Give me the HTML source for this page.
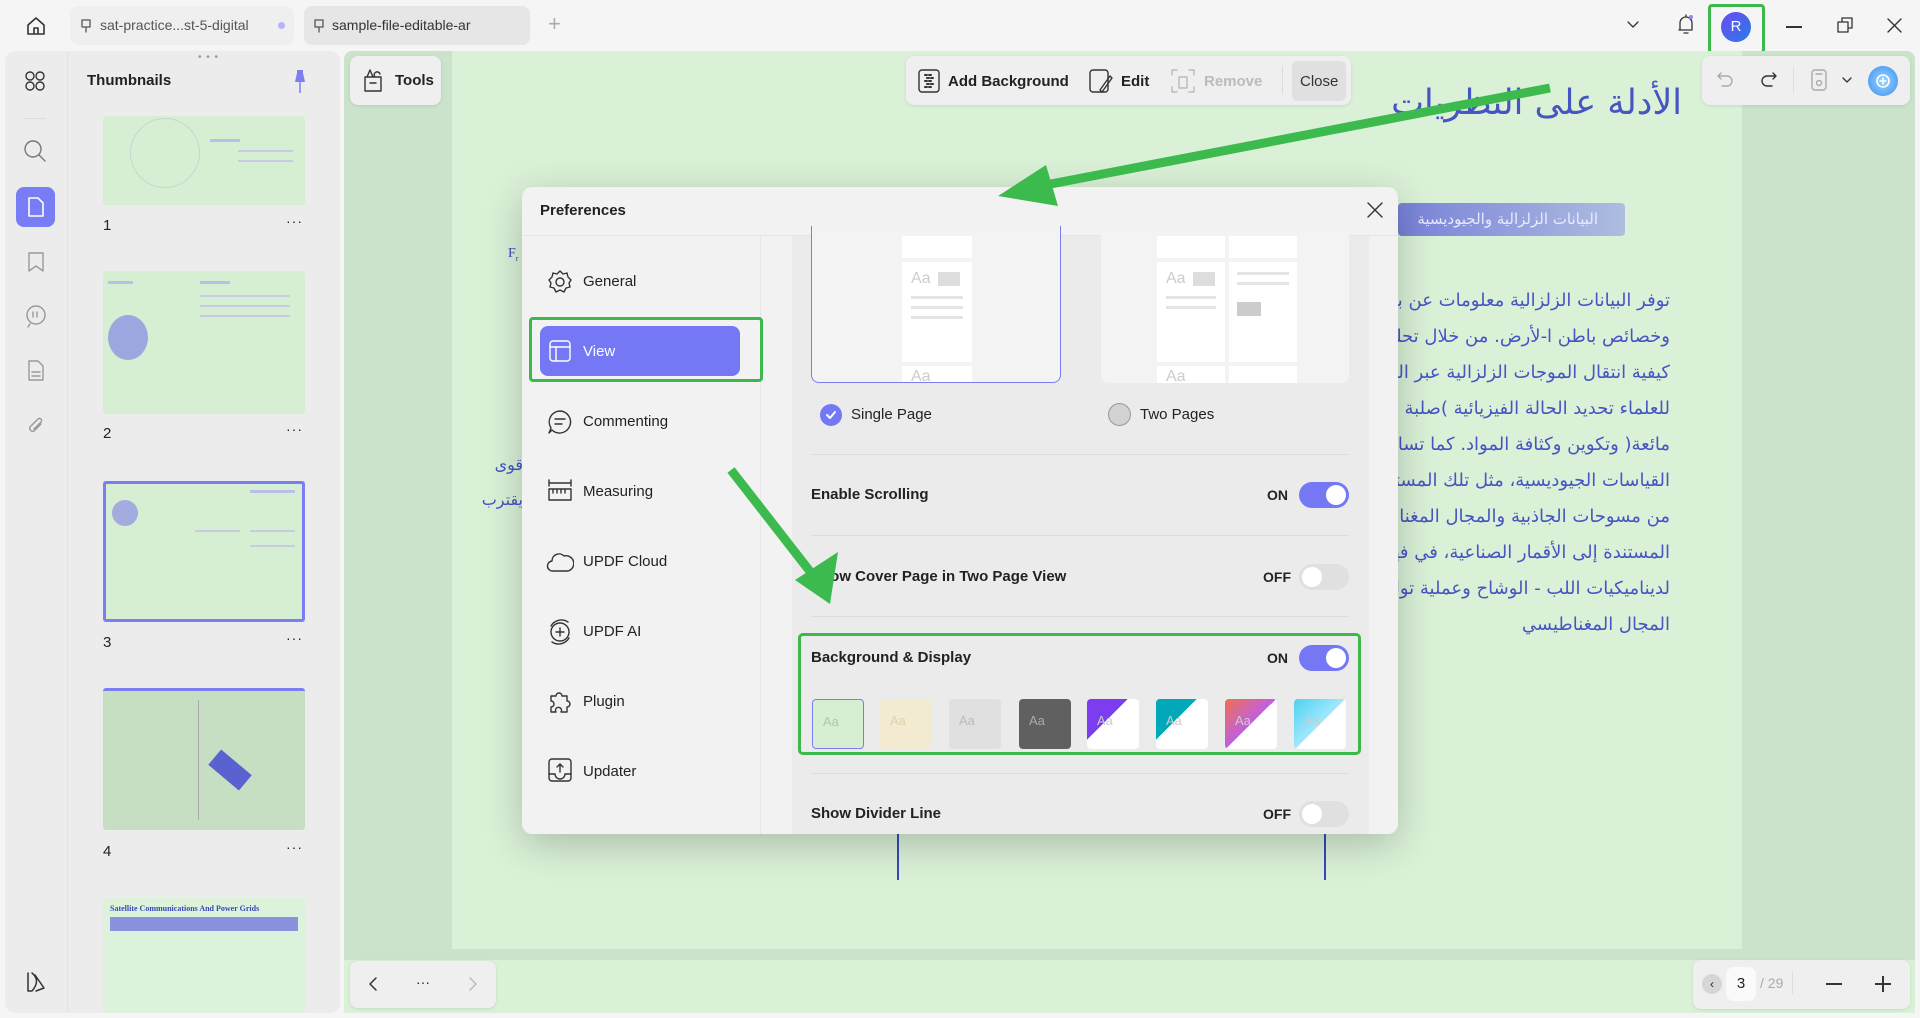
<!DOCTYPE html>
<html><head><meta charset="utf-8">
<style>
*{box-sizing:border-box;margin:0;padding:0}
body{width:1920px;height:1018px;overflow:hidden;background:#f5f5f5;font-family:"Liberation Sans","Noto Sans CJK SC",sans-serif;position:relative;color:#222}
.a{position:absolute}
.ar{font-family:"DejaVu Sans","Noto Sans CJK SC",sans-serif;direction:rtl;color:#4654c4}
.ico{position:absolute;fill:none;stroke:#333;stroke-width:1.6;stroke-linecap:round;stroke-linejoin:round}
.nav{position:absolute;left:583px;font-size:15px;color:#222}
.tg{position:absolute;width:50px;height:26px;border-radius:13px}
.tg i{position:absolute;top:3px;width:20px;height:20px;border-radius:50%;background:#fff}
.lbl{position:absolute;left:811px;font-size:15px;font-weight:bold;color:#222}
.st{position:absolute;font-size:14px;font-weight:bold;color:#222}
.hr{position:absolute;left:811px;width:538px;height:1px;background:#dcdcdc}
.sw{position:absolute;top:699px;width:52px;height:50px;border-radius:4px}
.sw b{position:absolute;left:10px;top:14px;font-weight:normal;font-size:13px;color:rgba(255,255,255,.7)}
.th{position:absolute;left:103px;width:202px;background:#d6efd2;border-radius:3px}
.tn{position:absolute;left:103px;font-size:15px}
.td{position:absolute;left:286px;font-size:14px;letter-spacing:1px}
.ln{position:absolute;height:3px;background:#b9bfe8}
</style></head><body>
<svg class="ico" style="left:25px;top:15px" width="22" height="22" viewBox="0 0 22 22"><path d="M3 10 L11 3 L19 10 V19 H3 Z M9 19 V13 H13 V19"/></svg>
<div class="a" style="left:70px;top:6px;width:224px;height:39px;border-radius:8px;background:#efefef"></div>
<svg class="ico" style="left:80px;top:19px;stroke:#555;stroke-width:1.3" width="12" height="14"><path d="M2 1H10V8H2Z M6 8V13"/></svg>
<div class="a" style="left:100px;top:17px;font-size:14px;color:#555">sat-practice...st-5-digital</div>
<div class="a" style="left:278px;top:22px;width:7px;height:7px;border-radius:50%;background:#b4b6f2"></div>
<div class="a" style="left:304px;top:6px;width:226px;height:39px;border-radius:8px;background:#e6e6e6"></div>
<svg class="ico" style="left:313px;top:19px;stroke:#555;stroke-width:1.3" width="12" height="14"><path d="M2 1H10V8H2Z M6 8V13"/></svg>
<div class="a" style="left:332px;top:17px;font-size:14px;color:#333">sample-file-editable-ar</div>
<div class="a" style="left:548px;top:11px;font-size:22px;color:#aaa;font-weight:200">+</div>
<svg class="ico" style="left:1626px;top:20px;stroke-width:1.3" width="14" height="10"><path d="M2 2L7 7L12 2"/></svg>
<svg class="ico" style="left:1676px;top:13px;stroke-width:1.3" width="20" height="24"><path d="M4 17V10A6 6 0 0 1 16 10V17H3 M8 20H12 M10 2V4"/><circle cx="15" cy="4" r="2" fill="#8a8cf0" stroke="none"/></svg>
<div class="a" style="left:1708px;top:4px;width:57px;height:50px;border:3px solid #3cb84c;border-radius:4px"></div>
<div class="a" style="left:1721px;top:12px;width:30px;height:30px;border-radius:50%;background:linear-gradient(135deg,#6a4cf0,#2c7ae8);color:#fff;font-size:15px;text-align:center;line-height:30px">R</div>
<div class="a" style="left:1786px;top:26px;width:16px;height:1.5px;background:#333"></div>
<svg class="ico" style="left:1836px;top:16px;stroke-width:1.3" width="18" height="18"><path d="M2 6H12V16H2Z M6 6V2H16V12H12"/></svg>
<svg class="ico" style="left:1887px;top:18px;stroke-width:1.4" width="15" height="15"><path d="M1 1L14 14M14 1L1 14"/></svg>

<div class="a" style="left:5px;top:51px;width:335px;height:962px;background:#ececec;border-radius:10px"></div>
<div class="a" style="left:67px;top:51px;width:1px;height:962px;background:#e2e2e2"></div>
<svg class="ico" style="left:24px;top:70px;stroke-width:1.4" width="22" height="22"><circle cx="6" cy="6" r="4"/><circle cx="16" cy="6" r="4"/><circle cx="6" cy="16" r="4"/><circle cx="16" cy="16" r="4"/></svg>
<div class="a" style="left:24px;top:118px;width:22px;height:1px;background:#ddd"></div>
<svg class="ico" style="left:23px;top:139px;stroke:#777;stroke-width:1.4" width="24" height="24"><circle cx="10" cy="10" r="8"/><path d="M16 16L22 22"/></svg>
<div class="a" style="left:16px;top:187px;width:39px;height:40px;border-radius:8px;background:#787cf5"></div>
<svg class="ico" style="left:26px;top:196px;stroke:#fff;stroke-width:1.6" width="20" height="22"><path d="M3 2H12L17 7V20H3Z"/></svg>
<svg class="ico" style="left:27px;top:251px;stroke:#999;stroke-width:1.4" width="18" height="22"><path d="M2 2H16V20L9 15L2 20Z"/></svg>
<svg class="ico" style="left:24px;top:304px;stroke:#999;stroke-width:1.4" width="24" height="24"><circle cx="12" cy="11" r="9"/><path d="M9 8V13M13 8V13M6 20L4 23"/></svg>
<svg class="ico" style="left:26px;top:359px;stroke:#999;stroke-width:1.4" width="20" height="24"><path d="M3 2H12L17 7V21H3Z M6 13H14M6 17H14"/></svg>
<svg class="ico" style="left:26px;top:414px;stroke:#999;stroke-width:1.4" width="20" height="24"><path d="M15 10L8 17A3 3 0 0 1 4 13L12 5A2 2 0 0 1 15 8L8 15"/></svg>
<svg class="ico" style="left:24px;top:970px;stroke-width:1.5" width="24" height="24"><path d="M4 3V21H8 M8 3C14 8 14 14 8 21 M11 5L20 18L12 21"/></svg>

<div class="a" style="left:198px;top:52px;font-size:10px;color:#999;letter-spacing:1px">• • •</div>
<div class="a" style="left:87px;top:72px;font-size:15px;font-weight:bold">Thumbnails</div>
<svg class="a" style="left:292px;top:69px" width="16" height="26"><path d="M5 1H11V4L13 13H3L5 4Z" fill="#7b7ff2"/><path d="M8 13V24" stroke="#7b7ff2" stroke-width="1.5"/></svg>

<div class="th" style="top:116px;height:89px"></div>
<div class="a" style="left:130px;top:118px;width:70px;height:70px;border-radius:50%;border:1px solid #c6d4d8"></div>
<div class="ln" style="left:210px;top:139px;width:30px"></div>
<div class="ln" style="left:238px;top:150px;width:55px;height:2px;background:#c8cbe2"></div>
<div class="ln" style="left:238px;top:160px;width:55px;height:2px;background:#c8cbe2"></div>
<div class="tn" style="top:217px">1</div><div class="td" style="top:213px">···</div>
<div class="th" style="top:271px;height:143px"></div>
<div class="a" style="left:108px;top:315px;width:40px;height:45px;border-radius:50%;background:#9ea6e0"></div>
<div class="ln" style="left:108px;top:281px;width:25px"></div><div class="ln" style="left:200px;top:281px;width:30px"></div>
<div class="ln" style="left:200px;top:295px;width:90px;height:2px;background:#c8cbe2"></div>
<div class="ln" style="left:200px;top:305px;width:90px;height:2px;background:#c8cbe2"></div>
<div class="ln" style="left:200px;top:315px;width:90px;height:2px;background:#c8cbe2"></div>
<div class="tn" style="top:425px">2</div><div class="td" style="top:421px">···</div>
<div class="th" style="top:481px;height:141px;border:3px solid #7a7ef2"></div>
<div class="a" style="left:112px;top:500px;width:26px;height:26px;border-radius:50%;background:#a4acdf"></div>
<div class="ln" style="left:250px;top:490px;width:45px"></div>
<div class="ln" style="left:195px;top:530px;width:45px;height:2px;background:#c8cbe2"></div>
<div class="ln" style="left:250px;top:530px;width:45px;height:2px;background:#c8cbe2"></div>
<div class="ln" style="left:250px;top:545px;width:45px;height:2px;background:#c8cbe2"></div>
<div class="tn" style="top:634px">3</div><div class="td" style="top:630px">···</div>
<div class="th" style="top:688px;height:142px;background:#c6dfc2;border-top:3px solid #7a7ef2"></div>
<div class="a" style="left:198px;top:700px;width:1px;height:120px;background:#aab"></div>
<div class="a" style="left:210px;top:760px;width:40px;height:20px;background:#5a62d0;transform:rotate(40deg)"></div>
<div class="tn" style="top:843px">4</div><div class="td" style="top:839px">···</div>
<div class="th" style="top:898px;height:115px;background:#ddf2da"></div>
<div class="a" style="left:110px;top:904px;font-size:8px;color:#3848b8;font-family:'Liberation Serif',serif;font-weight:bold">Satellite Communications And Power Grids</div>
<div class="a" style="left:110px;top:917px;width:188px;height:14px;background:#8a92dd"></div>

<div class="a" style="left:344px;top:51px;width:1571px;height:962px;background:#cae3ca;border-radius:8px"></div>
<div class="a" style="left:452px;top:51px;width:1290px;height:898px;background:#daf1d7"></div>
<div class="a" style="left:344px;top:960px;width:1571px;height:53px;background:#daf1d7"></div>

<div class="a" style="left:350px;top:56px;width:91px;height:49px;border-radius:8px;background:#efefef;box-shadow:0 1px 3px rgba(0,0,0,.1)"></div>
<svg class="ico" style="left:362px;top:67px;stroke-width:1.4" width="22" height="26"><path d="M3 10H19V24H3Z M8 16H14 M5 10L8 3L11 10 M13 10A3 3 0 1 1 18 7"/></svg>
<div class="a" style="left:395px;top:72px;font-size:15px;font-weight:bold">Tools</div>

<div class="a" style="left:906px;top:56px;width:445px;height:49px;border-radius:8px;background:#efefef;box-shadow:0 1px 3px rgba(0,0,0,.1)"></div>
<svg class="ico" style="left:917px;top:68px;stroke-width:1.4" width="24" height="26"><rect x="2" y="2" width="20" height="22" rx="3"/><path d="M8 7h2M12 7h2M10 10h2M14 10h2M8 13h2M12 13h2M10 16h2M14 16h2M8 19h2M12 19h2" stroke-width="2"/></svg>
<div class="a" style="left:948px;top:73px;font-size:15px;font-weight:bold">Add Background</div>
<svg class="ico" style="left:1088px;top:68px;stroke-width:1.4" width="26" height="26"><rect x="2" y="2" width="18" height="22" rx="3"/><path d="M12 22L22 8L24 10L14 24Z"/></svg>
<div class="a" style="left:1121px;top:73px;font-size:15px;font-weight:bold">Edit</div>
<svg class="ico" style="left:1170px;top:68px;stroke:#bbb;stroke-width:1.4" width="26" height="26"><path d="M2 7V2H7M19 2H24V7M24 19V24H19M7 24H2V19 M9 9H17V20H9Z"/></svg>
<div class="a" style="left:1204px;top:73px;font-size:15px;font-weight:bold;color:#bbb">Remove</div>
<div class="a" style="left:1282px;top:66px;width:1px;height:28px;background:#ddd"></div>
<div class="a" style="left:1292px;top:61px;width:54px;height:40px;border-radius:6px;background:#e0e0e0"></div>
<div class="a" style="left:1300px;top:73px;font-size:15px;color:#333">Close</div>

<div class="a" style="left:1702px;top:56px;width:208px;height:49px;border-radius:8px;background:#efefef;box-shadow:0 1px 3px rgba(0,0,0,.1)"></div>
<svg class="ico" style="left:1716px;top:71px;stroke:#aaa;stroke-width:1.4" width="18" height="18"><path d="M5 2L2 5L5 8M2 5H11A5 5 0 0 1 11 15H6"/></svg>
<svg class="ico" style="left:1760px;top:71px;stroke-width:1.4" width="18" height="18"><path d="M13 2L16 5L13 8M16 5H7A5 5 0 0 0 7 15H12"/></svg>
<div class="a" style="left:1793px;top:67px;width:1px;height:26px;background:#ddd"></div>
<svg class="ico" style="left:1810px;top:68px;stroke:#aaa;stroke-width:1.4" width="18" height="24"><rect x="2" y="2" width="14" height="20" rx="3"/><circle cx="9" cy="15" r="2.5"/><path d="M6 6H12"/></svg>
<svg class="ico" style="left:1842px;top:77px;stroke-width:1.3" width="10" height="8"><path d="M1 1L5 5L9 1"/></svg>
<div class="a" style="left:1868px;top:66px;width:30px;height:30px;border-radius:50%;background:radial-gradient(circle,#9ad8ff,#3b8cf0)"></div>
<svg class="ico" style="left:1874px;top:72px;stroke:#fff;stroke-width:1.6" width="18" height="18"><circle cx="9" cy="9" r="6"/><path d="M9 6V12M6 9H12"/></svg>

<div class="a ar" style="left:1280px;top:83px;width:402px;font-size:35px;text-align:right;white-space:nowrap">الأدلة على النظريات</div>
<div class="a" style="left:1398px;top:203px;width:227px;height:33px;border-radius:4px;background:linear-gradient(90deg,#7882d8,#aebde0)"></div>
<div class="a ar" style="left:1398px;top:210px;width:200px;font-size:15px;color:#e8eaff;text-align:right;white-space:nowrap">البيانات الزلزالية والجيوديسية</div>
<div class="a ar" style="left:1398px;top:283px;width:272px;font-size:18px;line-height:36px;text-align:right;white-space:nowrap;overflow:hidden">
توفر البيانات الزلزالية معلومات عن بنية<br>وخصائص باطن ا-لأرض. من خلال تحليل<br>كيفية انتقال الموجات الزلزالية عبر اللب، ي<br>للعلماء تحديد الحالة الفيزيائية )صلبة أو<br>مائعة( وتكوين وكثافة المواد. كما تساهم<br>القياسات الجيوديسية، مثل تلك المستم<br>من مسوحات الجاذبية والمجال المغناطيس<br>المستندة إلى الأقمار الصناعية، في فهمنا<br>لديناميكيات اللب - الوشاح وعملية توليد<br>المجال المغناطيسي</div>
<div class="a" style="left:508px;top:246px;font-size:14px;color:#3848b8;font-family:'Liberation Serif',serif">F<sub style="font-size:8px">r</sub></div>
<div class="a ar" style="left:470px;top:455px;width:53px;font-size:16px;text-align:right;overflow:hidden;white-space:nowrap">قوى</div>
<div class="a ar" style="left:460px;top:490px;width:63px;font-size:16px;text-align:right;overflow:hidden;white-space:nowrap">يقترب</div>
<div class="a" style="left:897px;top:834px;width:1.5px;height:46px;background:#3848b8"></div>
<div class="a" style="left:1324px;top:834px;width:1.5px;height:46px;background:#3848b8"></div>

<div class="a" style="left:350px;top:961px;width:146px;height:47px;border-radius:8px;background:#efefef;box-shadow:0 1px 3px rgba(0,0,0,.1)"></div>
<svg class="ico" style="left:368px;top:976px;stroke-width:1.5" width="10" height="16"><path d="M8 2L2 8L8 14"/></svg>
<div class="a" style="left:416px;top:974px;font-size:14px">···</div>
<svg class="ico" style="left:468px;top:976px;stroke:#bbb;stroke-width:1.5" width="10" height="16"><path d="M2 2L8 8L2 14"/></svg>
<div class="a" style="left:1693px;top:960px;width:217px;height:49px;border-radius:8px;background:#efefef;box-shadow:0 1px 3px rgba(0,0,0,.1)"></div>
<div class="a" style="left:1702px;top:974px;width:20px;height:20px;border-radius:50%;background:#d6d6d6;font-size:12px;text-align:center;line-height:20px">‹</div>
<div class="a" style="left:1726px;top:967px;width:30px;height:34px;border-radius:8px;background:#fafafa;font-size:15px;text-align:center;line-height:34px">3</div>
<div class="a" style="left:1760px;top:975px;font-size:14px;color:#aaa">/ 29</div>
<div class="a" style="left:1792px;top:972px;width:1px;height:22px;background:#ddd"></div>
<div class="a" style="left:1826px;top:983px;width:16px;height:1.5px;background:#333"></div>
<div class="a" style="left:1875px;top:983px;width:16px;height:1.5px;background:#333"></div>
<div class="a" style="left:1882px;top:976px;width:1.5px;height:16px;background:#333"></div>

<div class="a" style="left:522px;top:187px;width:876px;height:647px;border-radius:10px;background:#f2f2f2;box-shadow:0 10px 40px rgba(0,0,0,.22);overflow:hidden">
  <div class="a" style="left:0;top:48px;width:876px;height:1px;background:#e4e4e4"></div>
  <div class="a" style="left:238px;top:48px;width:1px;height:600px;background:#e6e6e6"></div>
  <div class="a" style="left:270px;top:49px;width:577px;height:600px;background:#ebebec"></div>
</div>
<div class="a" style="left:540px;top:202px;font-size:15px;font-weight:bold">Preferences</div>
<svg class="ico" style="left:1367px;top:202px;stroke-width:1.4" width="16" height="16"><path d="M1 1L15 15M15 1L1 15"/></svg>

<svg class="ico" style="left:547px;top:269px;stroke-width:1.4" width="26" height="26"><circle cx="13" cy="13" r="4"/><path d="M13 2L16 5L20 4L21 8L24 11L22 14L23 18L19 19L17 23L13 21L9 23L7 19L3 18L4 14L2 11L5 8L6 4L10 5Z"/></svg>
<div class="nav" style="top:273px">General</div>
<div class="a" style="left:529px;top:317px;width:234px;height:65px;border:3px solid #3cb84c;border-radius:4px"></div>
<div class="a" style="left:540px;top:326px;width:200px;height:50px;border-radius:8px;background:#7478f4"></div>
<svg class="ico" style="left:548px;top:339px;stroke:#fff;stroke-width:1.4" width="24" height="24"><rect x="2" y="2" width="20" height="20" rx="3"/><path d="M2 8H22M8 8V22"/></svg>
<div class="nav" style="top:343px;color:#fff">View</div>
<svg class="ico" style="left:547px;top:409px;stroke-width:1.4" width="26" height="26"><path d="M13 2A11 11 0 1 1 5 21L2 24L4 19A11 11 0 0 1 13 2Z M8 10H18M8 15H15"/></svg>
<div class="nav" style="top:413px">Commenting</div>
<svg class="ico" style="left:547px;top:478px;stroke-width:1.4" width="26" height="26"><path d="M2 2V8M24 2V8M2 5H24 M2 11H24V22H2Z M6 11V15M10 11V15M14 11V15M18 11V15"/></svg>
<div class="nav" style="top:483px">Measuring</div>
<svg class="ico" style="left:546px;top:549px;stroke-width:1.4" width="28" height="26"><path d="M7 22A5 5 0 0 1 6 12A7 7 0 0 1 18 7A6 6 0 0 1 22 22Z"/></svg>
<div class="nav" style="top:553px">UPDF Cloud</div>
<svg class="ico" style="left:546px;top:618px;stroke-width:1.4" width="28" height="28"><circle cx="14" cy="14" r="9"/><path d="M14 10V18M10 14H18 M5 8A12 12 0 0 1 22 4M23 20A12 12 0 0 1 6 24"/></svg>
<div class="nav" style="top:623px">UPDF AI</div>
<svg class="ico" style="left:547px;top:688px;stroke-width:1.4" width="26" height="26"><path d="M4 8H9A3 3 0 1 1 15 8H20V13A3 3 0 1 1 20 19V24H14A3 3 0 1 0 9 24H4V19A3 3 0 1 0 4 13Z"/></svg>
<div class="nav" style="top:693px">Plugin</div>
<svg class="ico" style="left:547px;top:757px;stroke-width:1.4" width="26" height="26"><rect x="2" y="2" width="22" height="22" rx="3"/><path d="M13 15V7M10 10L13 7L16 10 M2 17H8A5 5 0 0 0 18 17H24"/></svg>
<div class="nav" style="top:763px">Updater</div>

<div class="a" style="left:811px;top:226px;width:250px;height:157px;border:1.5px solid #7a7ef2;border-top:none;border-radius:0 0 8px 8px;background:#f3f3f3;overflow:hidden">
 <div class="a" style="left:90px;top:10px;width:70px;height:22px;background:#fff"></div>
 <div class="a" style="left:90px;top:36px;width:70px;height:100px;background:#fff"><span class="a" style="left:9px;top:8px;font-size:16px;color:#ccc">Aa</span><span class="a" style="left:36px;top:10px;width:22px;height:14px;background:#ddd"></span><span class="a" style="left:9px;top:34px;width:52px;height:3px;background:#e4e4e4"></span><span class="a" style="left:9px;top:44px;width:52px;height:3px;background:#e4e4e4"></span><span class="a" style="left:9px;top:54px;width:52px;height:3px;background:#e4e4e4"></span></div>
 <div class="a" style="left:90px;top:140px;width:70px;height:30px;background:#fff"><span class="a" style="left:9px;top:2px;font-size:16px;color:#ccc">Aa</span></div>
</div>
<div class="a" style="left:1101px;top:226px;width:248px;height:157px;border-radius:0 0 8px 8px;background:#f3f3f3;overflow:hidden">
 <div class="a" style="left:56px;top:10px;width:68px;height:22px;background:#fff"></div><div class="a" style="left:128px;top:10px;width:68px;height:22px;background:#fff"></div>
 <div class="a" style="left:56px;top:36px;width:68px;height:100px;background:#fff"><span class="a" style="left:9px;top:8px;font-size:16px;color:#ccc">Aa</span><span class="a" style="left:36px;top:10px;width:22px;height:14px;background:#ddd"></span><span class="a" style="left:9px;top:34px;width:50px;height:3px;background:#e4e4e4"></span><span class="a" style="left:9px;top:44px;width:50px;height:3px;background:#e4e4e4"></span></div>
 <div class="a" style="left:128px;top:36px;width:68px;height:100px;background:#fff"><span class="a" style="left:8px;top:10px;width:52px;height:3px;background:#e4e4e4"></span><span class="a" style="left:8px;top:20px;width:52px;height:3px;background:#e4e4e4"></span><span class="a" style="left:8px;top:40px;width:24px;height:14px;background:#ccc"></span></div>
 <div class="a" style="left:56px;top:140px;width:68px;height:30px;background:#fff"><span class="a" style="left:9px;top:2px;font-size:16px;color:#ccc">Aa</span></div><div class="a" style="left:128px;top:140px;width:68px;height:30px;background:#fff"></div>
</div>
<div class="a" style="left:820px;top:404px;width:22px;height:22px;border-radius:50%;background:#7478f4"></div>
<svg class="ico" style="left:825px;top:409px;stroke:#fff;stroke-width:2" width="12" height="12"><path d="M2 6L5 9L10 3"/></svg>
<div class="a" style="left:851px;top:406px;font-size:15px">Single Page</div>
<div class="a" style="left:1108px;top:403px;width:23px;height:23px;border-radius:50%;background:#d2d2d2;border:1px solid #999"></div>
<div class="a" style="left:1140px;top:406px;font-size:15px">Two Pages</div>

<div class="hr" style="top:454px"></div>
<div class="lbl" style="top:486px">Enable Scrolling</div>
<div class="st" style="left:1267px;top:487px">ON</div>
<div class="tg" style="left:1299px;top:482px;background:#7478f4"><i style="right:3px"></i></div>
<div class="hr" style="top:535px"></div>
<div class="lbl" style="top:568px">Show Cover Page in Two Page View</div>
<div class="st" style="left:1263px;top:569px">OFF</div>
<div class="tg" style="left:1299px;top:564px;background:#e0e0e0"><i style="left:3px"></i></div>
<div class="hr" style="top:616px"></div>
<div class="a" style="left:798px;top:633px;width:563px;height:122px;border:3px solid #3cb84c;border-radius:5px"></div>
<div class="lbl" style="top:649px">Background &amp; Display</div>
<div class="st" style="left:1267px;top:650px">ON</div>
<div class="tg" style="left:1299px;top:645px;background:#7478f4"><i style="right:3px"></i></div>
<div class="sw" style="left:812px;background:#d6efd2;border:1.5px solid #7a7ef2"><b style="color:#aac8a8">Aa</b></div>
<div class="sw" style="left:880px;background:#f3ead2"><b style="color:#e0d2ac">Aa</b></div>
<div class="sw" style="left:949px;background:#e0e0e0"><b style="color:#bbb">Aa</b></div>
<div class="sw" style="left:1019px;background:#606060"><b style="color:#aaa">Aa</b></div>
<div class="sw" style="left:1087px;background:linear-gradient(135deg,#7c3cf0 40%,#fff 40%);"><b style="color:#ccc">Aa</b></div>
<div class="sw" style="left:1156px;background:linear-gradient(135deg,#00a8b8 40%,#fff 40%)"><b style="color:#ccc">Aa</b></div>
<div class="sw" style="left:1225px;background:linear-gradient(135deg,#f07050,#c060e0 50%,#fff 50%)"><b style="color:#ccc">Aa</b></div>
<div class="sw" style="left:1294px;background:linear-gradient(135deg,#50d0f0,#a0e8ff 50%,#fff 50%)"><b style="color:#ccc">Aa</b></div>
<div class="hr" style="top:773px"></div>
<div class="lbl" style="top:805px">Show Divider Line</div>
<div class="st" style="left:1263px;top:806px">OFF</div>
<div class="tg" style="left:1299px;top:801px;background:#e0e0e0"><i style="left:3px"></i></div>

<svg class="a" style="left:0;top:0" width="1920" height="1018">
 <line x1="1550" y1="88" x2="1030" y2="188" stroke="#3dba4e" stroke-width="9"/>
 <polygon points="998,196 1046,165 1058,206" fill="#3dba4e"/>
 <line x1="731" y1="470" x2="812" y2="574" stroke="#3dba4e" stroke-width="9"/>
 <polygon points="830,604 795,580 838,552" fill="#3dba4e"/>
</svg>
</body></html>
